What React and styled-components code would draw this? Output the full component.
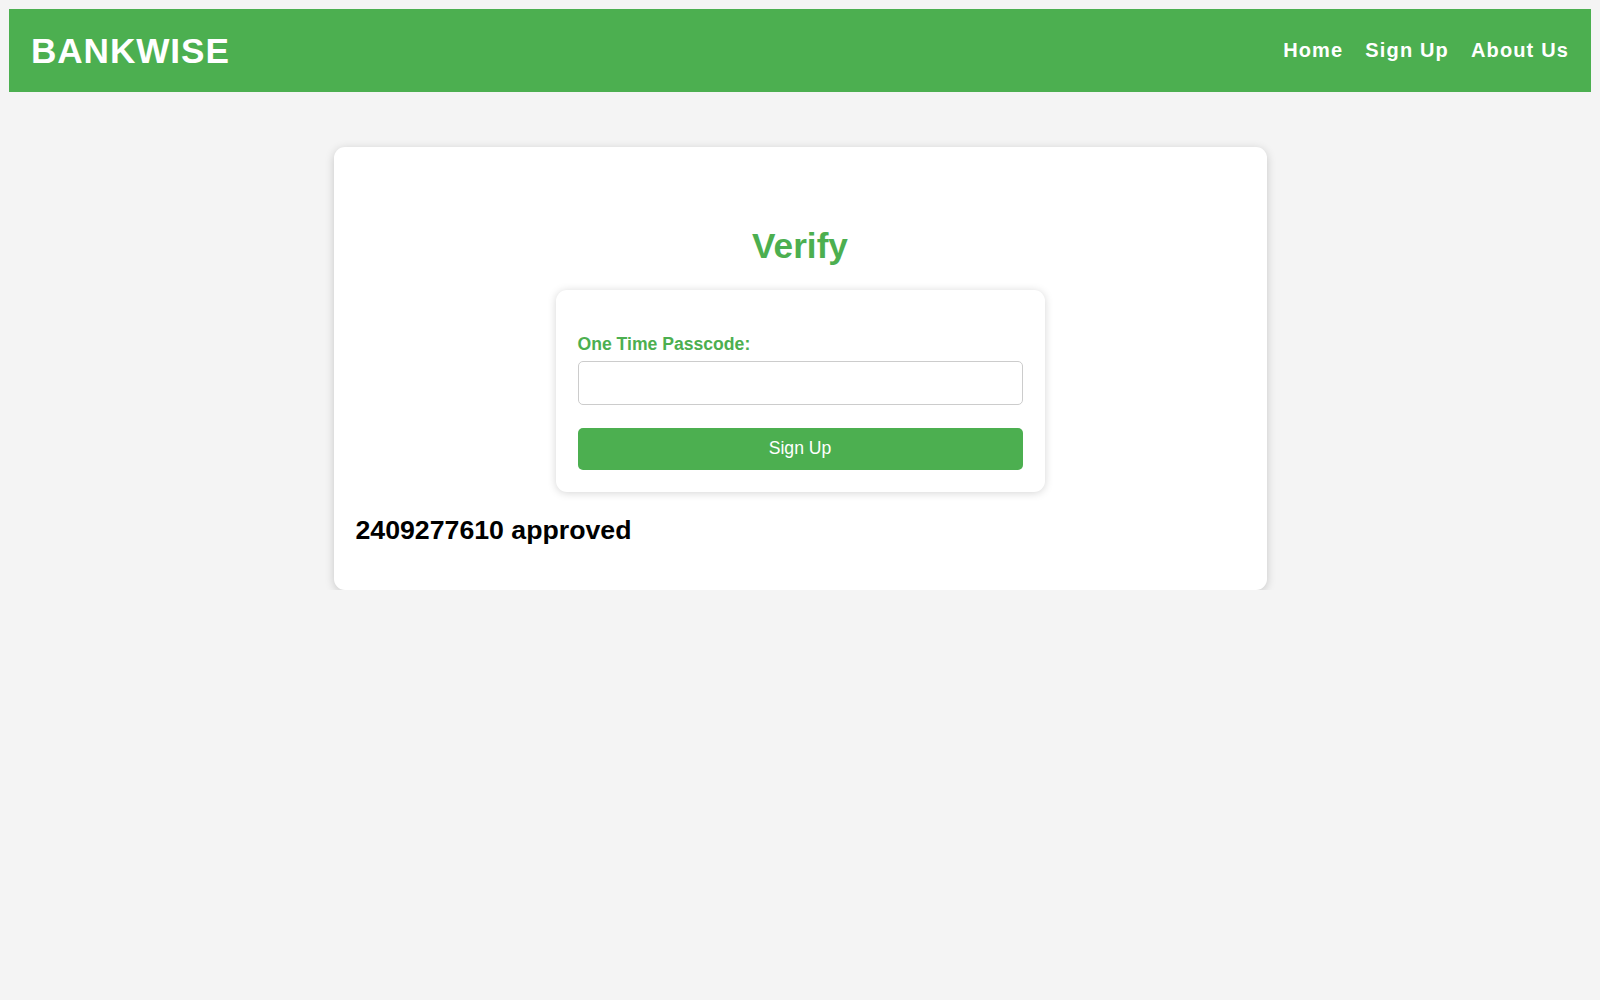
import React from 'react';
import styled, { createGlobalStyle } from 'styled-components';

const GlobalStyle = createGlobalStyle`
  * {
    box-sizing: border-box;
  }
  body {
    margin: 9px;
    background: #f4f4f4;
    font-family: "Liberation Sans", Arial, Helvetica, sans-serif;
  }
`;

const Header = styled.header`
  height: 83px;
  padding: 0 22px;
  background: #4caf50;
  display: flex;
  flex-direction: row;
  justify-content: space-between;
  align-items: center;
`;

const Logo = styled.h1`
  margin: 0;
  color: white;
  font-size: 35.2px;
  font-weight: bold;
  letter-spacing: 0.9px;
`;

const Nav = styled.nav`
  display: flex;
  flex-direction: row;
  gap: 22px;
`;

const NavLink = styled.a`
  color: white;
  text-decoration: none;
  font-size: 20px;
  font-weight: bold;
  letter-spacing: 1.15px;
`;

const Card = styled.main`
  width: 933px;
  margin: 55px auto 0;
  padding: 22px;
  background: white;
  border-radius: 11px;
  box-shadow: 0 2px 10px rgba(0, 0, 0, 0.18);
`;

const Title = styled.h2`
  margin: 57px 0 23.5px;
  text-align: center;
  color: #4caf50;
  font-size: 35.2px;
  font-weight: bold;
`;

const FormBox = styled.form`
  width: 489px;
  margin: 0 auto;
  padding: 44px 22px 22px;
  background: white;
  border-radius: 11px;
  box-shadow: 0 1px 9px rgba(0, 0, 0, 0.17);
  display: flex;
  flex-direction: column;
`;

const Label = styled.label`
  color: #4caf50;
  font-size: 17.6px;
  font-weight: bold;
  margin-bottom: 6px;
`;

const Input = styled.input`
  height: 44px;
  padding: 0 11px;
  border: 1px solid #cccccc;
  border-radius: 5px;
  font-size: 17.6px;
  font-family: inherit;
  outline: none;
`;

const Button = styled.button`
  height: 42px;
  margin-top: 23px;
  border: none;
  border-radius: 5px;
  background: #4caf50;
  color: white;
  font-size: 17.6px;
  font-family: inherit;
  cursor: pointer;
`;

const Status = styled.h3`
  margin: 23px 0 22px;
  font-size: 26.7px;
  font-weight: bold;
  color: #000;
`;

export default function App() {
  return (
    <>
      <GlobalStyle />
      <Header>
        <Logo>BANKWISE</Logo>
        <Nav>
          <NavLink href="#">Home</NavLink>
          <NavLink href="#">Sign Up</NavLink>
          <NavLink href="#">About Us</NavLink>
        </Nav>
      </Header>
      <Card>
        <Title>Verify</Title>
        <FormBox onSubmit={e => e.preventDefault()}>
          <Label htmlFor="otp">One Time Passcode:</Label>
          <Input id="otp" type="text" />
          <Button type="submit">Sign Up</Button>
        </FormBox>
        <Status>2409277610 approved</Status>
      </Card>
    </>
  );
}
